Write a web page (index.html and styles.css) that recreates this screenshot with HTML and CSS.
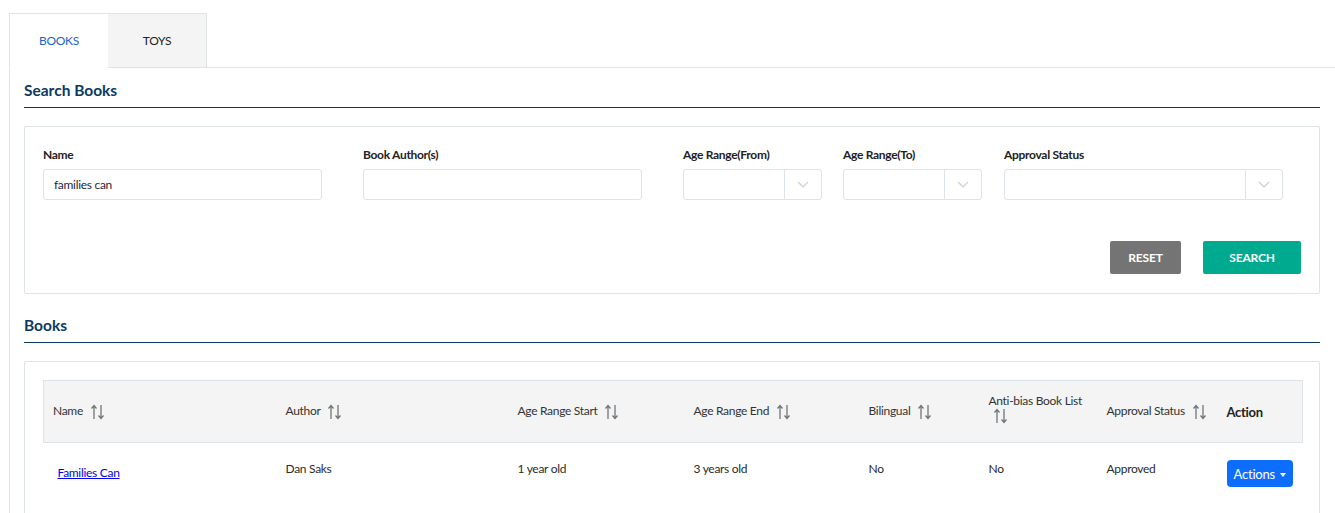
FILE: index.html
```html
<!DOCTYPE html>
<html>
  <head>
    <title>Search Books</title>
    <link rel="stylesheet" href="styles.css">
  </head>
  <body>
    <div class="tabs">
      <div class="tab active">BOOKS</div>
      <div class="tab">TOYS</div>
      <div class="tab-fill"></div>
    </div>

    <div class="panel">
      <h2 class="section-title">Search Books</h2>
      <div class="card search-card">
        <div class="fields">
          <div class="field">
            <label>Name</label>
            <input type="text" class="text-input" value="families can" />
          </div>
          <div class="field">
            <label>Book Author(s)</label>
            <input type="text" class="text-input" />
          </div>
          <div class="field">
            <label>Age Range(From)</label>
            <div class="select-box">
              <span class="select-value"></span>
              <span class="select-arrow">
                <svg width="12" height="7" viewBox="0 0 12 7"><path d="M1 1 L6 6 L11 1" fill="none" stroke="#c9cfd3" stroke-width="1.2"/></svg>
              </span>
            </div>
          </div>
          <div class="field">
            <label>Age Range(To)</label>
            <div class="select-box">
              <span class="select-value"></span>
              <span class="select-arrow">
                <svg width="12" height="7" viewBox="0 0 12 7"><path d="M1 1 L6 6 L11 1" fill="none" stroke="#c9cfd3" stroke-width="1.2"/></svg>
              </span>
            </div>
          </div>
          <div class="field">
            <label>Approval Status</label>
            <div class="select-box">
              <span class="select-value"></span>
              <span class="select-arrow">
                <svg width="12" height="7" viewBox="0 0 12 7"><path d="M1 1 L6 6 L11 1" fill="none" stroke="#c9cfd3" stroke-width="1.2"/></svg>
              </span>
            </div>
          </div>
        </div>
        <div class="buttons">
          <button class="btn btn-reset">RESET</button>
          <button class="btn btn-search">SEARCH</button>
        </div>
      </div>

      <h2 class="section-title books-title">Books</h2>
      <div class="card table-card">
        <table class="books-table">
          <colgroup>
            <col style="width: 232px" />
            <col style="width: 232px" />
            <col style="width: 176px" />
            <col style="width: 175px" />
            <col style="width: 120px" />
            <col style="width: 118px" />
            <col style="width: 120px" />
            <col style="width: 86px" />
          </colgroup>
          <thead>
            <tr>
              <th>Name <span class="sort"><svg width="15" height="16" viewBox="0 0 15 16"><path d="M4 15 V2 M1.5 4.5 L4 1.5 L6.5 4.5 M11 1 V14 M8.5 11.5 L11 14.5 L13.5 11.5" fill="none" stroke="#6f767c" stroke-width="1.3"/></svg></span></th>
              <th>Author <span class="sort"><svg width="15" height="16" viewBox="0 0 15 16"><path d="M4 15 V2 M1.5 4.5 L4 1.5 L6.5 4.5 M11 1 V14 M8.5 11.5 L11 14.5 L13.5 11.5" fill="none" stroke="#6f767c" stroke-width="1.3"/></svg></span></th>
              <th>Age Range Start <span class="sort"><svg width="15" height="16" viewBox="0 0 15 16"><path d="M4 15 V2 M1.5 4.5 L4 1.5 L6.5 4.5 M11 1 V14 M8.5 11.5 L11 14.5 L13.5 11.5" fill="none" stroke="#6f767c" stroke-width="1.3"/></svg></span></th>
              <th>Age Range End <span class="sort"><svg width="15" height="16" viewBox="0 0 15 16"><path d="M4 15 V2 M1.5 4.5 L4 1.5 L6.5 4.5 M11 1 V14 M8.5 11.5 L11 14.5 L13.5 11.5" fill="none" stroke="#6f767c" stroke-width="1.3"/></svg></span></th>
              <th>Bilingual <span class="sort"><svg width="15" height="16" viewBox="0 0 15 16"><path d="M4 15 V2 M1.5 4.5 L4 1.5 L6.5 4.5 M11 1 V14 M8.5 11.5 L11 14.5 L13.5 11.5" fill="none" stroke="#6f767c" stroke-width="1.3"/></svg></span></th>
              <th class="wrap">Anti-bias Book List <span class="sort"><svg width="15" height="16" viewBox="0 0 15 16"><path d="M4 15 V2 M1.5 4.5 L4 1.5 L6.5 4.5 M11 1 V14 M8.5 11.5 L11 14.5 L13.5 11.5" fill="none" stroke="#6f767c" stroke-width="1.3"/></svg></span></th>
              <th>Approval Status <span class="sort"><svg width="15" height="16" viewBox="0 0 15 16"><path d="M4 15 V2 M1.5 4.5 L4 1.5 L6.5 4.5 M11 1 V14 M8.5 11.5 L11 14.5 L13.5 11.5" fill="none" stroke="#6f767c" stroke-width="1.3"/></svg></span></th>
              <th class="action-head">Action</th>
            </tr>
          </thead>
          <tbody>
            <tr>
              <td><a href="#" class="book-link">Families Can</a></td>
              <td>Dan Saks</td>
              <td>1 year old</td>
              <td>3 years old</td>
              <td>No</td>
              <td>No</td>
              <td>Approved</td>
              <td><button class="actions-btn">Actions <span class="caret"></span></button></td>
            </tr>
          </tbody>
        </table>
      </div>
    </div>
  </body>
</html>
```

FILE: styles.css
```css
body {
  margin: 0;
  padding: 13px 0 0 9px;
  font-family: Lato, "Open Sans", sans-serif;
  font-size: 12px;
  letter-spacing: -0.3px;
  color: #2b2b2b;
  background: #fff;
}
.tabs {
  display: flex;
  height: 55px;
}
.tab {
  width: 98px;
  display: flex;
  align-items: center;
  justify-content: center;
  background: #f4f4f4;
  border: 1px solid #dee3e6;
  border-left: none;
  color: #222;
  font-size: 12px;
}
.tab.active {
  background: #fff;
  border-left: 1px solid #dee3e6;
  border-right: none;
  border-bottom-color: transparent;
  color: #1d63c4;
}
.tab-fill {
  flex: 1;
  border-bottom: 1px solid #dee3e6;
}
.panel {
  border-left: 1px solid #dee3e6;
  padding: 13px 15px 0 14px;
}
.section-title {
  margin: 0;
  padding-bottom: 8px;
  border-bottom: 1px solid #0b3a5e;
  font-size: 15.5px;
  letter-spacing: 0;
  font-weight: bold;
  color: #0b3a5e;
  line-height: 18px;
}
.books-title {
  margin-top: 22px;
}
.card {
  border: 1px solid #dee3e6;
  border-radius: 2px;
  margin-top: 18px;
}
.search-card {
  margin-top: 18px;
  padding: 20px 18px 19px 18px;
}
.fields {
  display: grid;
  grid-template-columns: 279px 279px 139px 139px 279px;
  column-gap: 41px;
}
.fields .field:nth-child(3) {
  margin-right: -19px;
}
.fields .field:nth-child(4) {
  margin-left: -20px;
}
.fields .field:nth-child(5) {
  margin-left: -39px;
}
.field label {
  display: block;
  font-weight: bold;
  font-size: 12px;
  line-height: 15px;
  margin-bottom: 7px;
  color: #222;
}
.text-input {
  box-sizing: border-box;
  width: 279px;
  height: 31px;
  border: 1px solid #dde3e6;
  border-radius: 3px;
  padding: 0 10px;
  font-family: Lato, sans-serif;
  font-size: 12px;
  letter-spacing: -0.3px;
  color: #2a1f3a;
}
.select-box {
  box-sizing: border-box;
  display: flex;
  height: 31px;
  border: 1px solid #dde3e6;
  border-radius: 3px;
}
.fields .field:nth-child(3) .select-box,
.fields .field:nth-child(4) .select-box {
  width: 139px;
}
.fields .field:nth-child(5) .select-box {
  width: 279px;
}
.select-value {
  flex: 1;
}
.select-arrow {
  width: 36px;
  border-left: 1px solid #dde3e6;
  display: flex;
  align-items: center;
  justify-content: center;
}
.buttons {
  display: flex;
  justify-content: flex-end;
  gap: 22px;
  margin-top: 41px;
}
.btn {
  height: 33px;
  border: none;
  border-radius: 2px;
  color: #fff;
  font-family: Lato, sans-serif;
  font-weight: bold;
  font-size: 12px;
  letter-spacing: -0.2px;
}
.btn-reset {
  width: 71px;
  background: #747474;
}
.btn-search {
  width: 98px;
  background: #00aa8e;
}
.table-card {
  padding: 18px 17px 8px 18px;
}
.books-table {
  width: 1259px;
  table-layout: fixed;
  border-collapse: collapse;
}
.books-table th {
  height: 55px;
  background: #f4f4f4;
  border-top: 1px solid #dde3e6;
  border-bottom: 1px solid #dde3e6;
  text-align: left;
  font-weight: normal;
  font-size: 12px;
  padding: 0 0 0 10px;
  color: #333;
}
.books-table th:first-child {
  border-left: 1px solid #dde3e6;
  padding-left: 9px;
}
.books-table th:last-child {
  border-right: 1px solid #dde3e6;
}
.books-table th.wrap {
  line-height: 14px;
  padding-bottom: 6px;
}
.books-table th.action-head {
  font-weight: bold;
  font-size: 13px;
  color: #222;
}
.sort {
  display: inline-block;
  vertical-align: middle;
  margin-left: 4px;
  height: 16px;
}
.books-table td {
  vertical-align: top;
  padding: 18px 0 20px 10px;
  font-size: 12px;
  color: #2b2b2b;
}
.book-link {
  display: inline-block;
  margin: 4px 0 0 4px;
  color: #0000ee;
}
.actions-btn {
  margin-top: -1px;
  height: 27px;
  padding: 0 7px;
  border: none;
  border-radius: 4px;
  background: #0d6efd;
  color: #fff;
  font-family: Lato, sans-serif;
  font-size: 13px;
  letter-spacing: -0.2px;
}
.caret {
  display: inline-block;
  margin-left: 2px;
  vertical-align: 2px;
  border-top: 4px solid #fff;
  border-left: 3.5px solid transparent;
  border-right: 3.5px solid transparent;
}
```
